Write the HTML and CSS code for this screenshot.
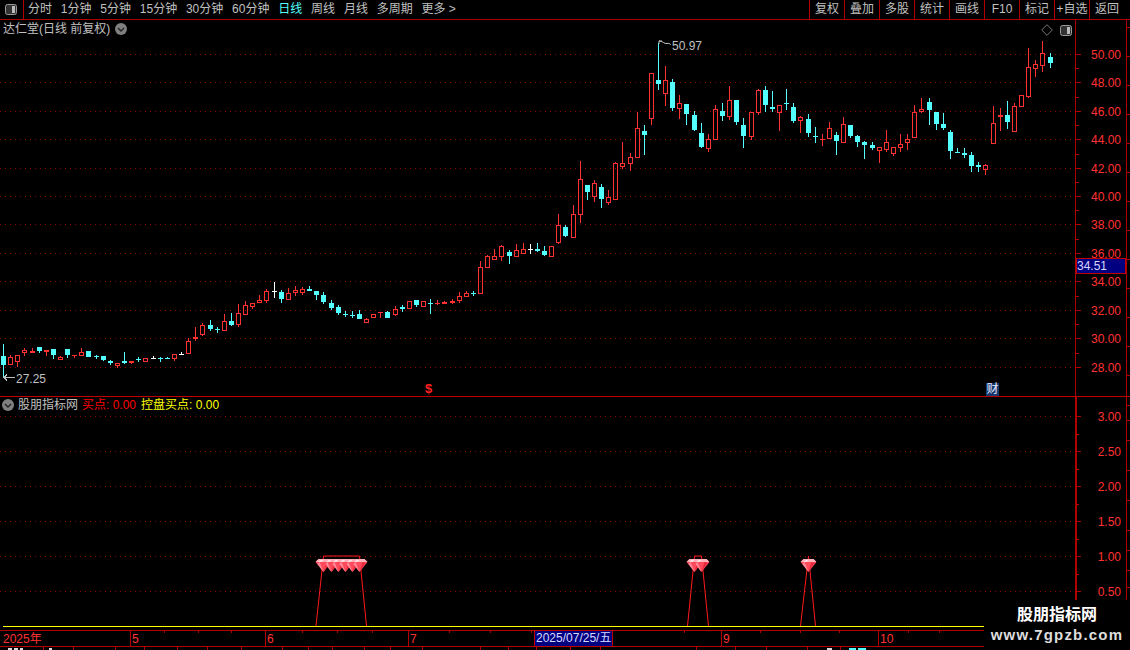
FILE: index.html
```html
<!DOCTYPE html>
<html lang="zh-CN">
<head>
<meta charset="utf-8">
<title>达仁堂 日线</title>
<link rel="stylesheet" href="styles.css">
</head>
<body>
<div class="app">
  <header class="toolbar">
    <div class="layout-btn"><svg class="panel-icon" viewBox="0 0 12 11"><rect x=".5" y=".5" width="11" height="10" rx="2" class="pi-frame"/><rect x="7" y="2" width="3" height="7" class="pi-fill"/></svg></div>
    <nav class="periods">
      <span>分时</span><span>1分钟</span><span>5分钟</span><span>15分钟</span><span>30分钟</span><span>60分钟</span><span class="active">日线</span><span>周线</span><span>月线</span><span>多周期</span><span>更多 &gt;</span>
    </nav>
    <nav class="actions">
      <span>复权</span><span>叠加</span><span>多股</span><span>统计</span><span>画线</span><span>F10</span><span>标记</span><span>+自选</span><span>返回</span>
    </nav>
  </header>

  <section class="pane pane-upper">
    <svg id="upper" class="canvas" viewBox="0 20 1130 376" width="1130" height="376"></svg>
    <div class="pane-title">
      <span>达仁堂(日线 前复权)</span>
      <svg class="chev" viewBox="0 0 12 12"><circle cx="6" cy="6" r="6" class="chev-bg"/><path d="M3 5l3 3 3-3" class="chev-line"/></svg>
    </div>
    <div class="pane-tools">
      <svg class="diamond" viewBox="0 0 12 12"><path d="M6 .7L11.3 6 6 11.3.7 6z"/></svg>
      <svg class="panel-icon" viewBox="0 0 12 11"><rect x=".5" y=".5" width="11" height="10" rx="2" class="pi-frame"/><rect x="7" y="2" width="3" height="7" class="pi-fill"/></svg>
    </div>
    <div class="last-price">34.51</div>
    <div class="flag-s">$</div>
    <div class="flag-cai">财</div>
  </section>

  <section class="pane pane-lower">
    <svg id="lower" class="canvas" viewBox="0 397 1130 233" width="1130" height="233">
      <defs>
        <symbol id="gem" viewBox="0 0 16 13">
          <path d="M0 3L3 0H13L16 3L8 13Z" fill="#ff4a5c"/>
          <path d="M3 0H13L16 3H0Z" fill="#ffb4bc"/>
          <path d="M4 3L8 13L2 5Z" fill="#ff8c98"/>
          <path d="M11 3L8 13L14 4Z" fill="#e8283c"/>
          <path d="M5 1H8L6 3H3Z" fill="#ffe0e4"/>
        </symbol>
      </defs>
    </svg>
    <div class="pane-title lower-title">
      <svg class="chev" viewBox="0 0 12 12"><circle cx="6" cy="6" r="6" class="chev-bg"/><path d="M3 5l3 3 3-3" class="chev-line"/></svg>
      <span class="name">股朋指标网</span>
      <span class="buy">买点: 0.00</span>
      <span class="control">控盘买点: 0.00</span>
    </div>
  </section>

  <section class="timebar">
    <svg id="time" class="canvas" viewBox="0 630 1130 20" width="1130" height="20"></svg>
    <div class="cursor-date">2025/07/25/五</div>
  </section>

  <aside class="watermark">
    <strong>股朋指标网</strong>
    <span>www.7gpzb.com</span>
  </aside>
</div>
<script src="chart.js"></script>
</body>
</html>
```

FILE: styles.css
```css
* { box-sizing: border-box; }
html, body { margin: 0; padding: 0; background: #000; }
body { font-family: "Liberation Sans", "Noto Sans CJK SC", sans-serif; font-size: 12px; color: #c0c0c0; }
.app { position: relative; width: 1130px; height: 650px; overflow: hidden; background: #000; display: flex; flex-direction: column; }

.toolbar { display: flex; align-items: center; height: 20px; border-bottom: 1px solid #b00000; line-height: 19px; flex: none; }
.layout-btn { width: 24px; height: 19px; border-right: 1px solid #b00000; display: flex; align-items: center; justify-content: center; padding-right: 1px; }
.panel-icon { width: 12px; height: 11px; display: block; }
.pi-frame { fill: #333; stroke: #999; stroke-width: 1; }
.pi-fill { fill: #bbb; }
.periods { display: flex; gap: 8.8px; padding-left: 4px; white-space: nowrap; }
.periods .active { color: #54ffff; }
.actions { margin-left: auto; display: flex; height: 19px; }
.actions span { width: 35px; border-left: 1px solid #b00000; text-align: center; white-space: nowrap; letter-spacing: 0; }
.actions span:last-child { width: 41px; padding-right: 6px; }

.pane { position: relative; flex: none; }
.canvas { display: block; }
.pane-upper { height: 377px; border-bottom: 1px solid #c00000; }
.pane-lower { height: 233px; }

.pane-title { position: absolute; left: 3px; top: 2px; display: flex; align-items: center; gap: 5px; line-height: 14px; white-space: nowrap; }
.chev { width: 12px; height: 12px; display: block; }
.chev-bg { fill: #808080; }
.chev-line { fill: none; stroke: #222; stroke-width: 1.4; }
.lower-title { left: 2px; top: 1px; gap: 4px; }
.lower-title .buy { color: #ff0000; }
.lower-title .control { color: #ffff00; margin-left: 1px; }

.pane-tools { position: absolute; right: 58px; top: 4px; display: flex; align-items: center; gap: 7px; }
.diamond { width: 12px; height: 12px; display: block; }
.diamond path { fill: none; stroke: #777; stroke-width: 1; }

.last-price { position: absolute; left: 1076px; top: 238px; width: 50px; height: 16px; background: #000080; border: 1px solid #c00000; color: #d8d8ff; line-height: 14px; white-space: nowrap; }
.flag-s { position: absolute; left: 424px; top: 362px; width: 9px; color: #ff2020; font-weight: bold; line-height: 14px; font-size: 13px; text-align: center; }
.flag-cai { position: absolute; left: 986px; top: 363px; width: 13px; height: 13px; background: #16386c; color: #e8e8ff; line-height: 13px; text-align: center; }

.timebar { position: relative; flex: none; height: 20px; }
.cursor-date { position: absolute; left: 534px; top: 0; width: 79px; height: 17px; background: #000080; border: 1px solid #c00000; color: #d8d8ff; line-height: 15px; padding-left: 1px; white-space: nowrap; }

.watermark { position: absolute; left: 984px; top: 600px; width: 146px; height: 50px; background: #000; display: flex; flex-direction: column; align-items: center; padding-top: 4px; color: #f2f2f2; }
.watermark strong { font-size: 16px; line-height: 21px; font-weight: 700; color: #fff; }
.watermark span { font-size: 15px; line-height: 19px; font-weight: 700; letter-spacing: 1.2px; color: #ddd; }

.t-axis { font-size: 12px; fill: #ff3232; font-family: "Liberation Sans", sans-serif; }
.t-note { font-size: 12px; fill: #c0c0c0; font-family: "Liberation Sans", sans-serif; }
.t-time { font-size: 12px; fill: #ff3232; font-family: "Liberation Sans", "Noto Sans CJK SC", sans-serif; }
```

FILE: chart.js
```js
const NS = 'http://www.w3.org/2000/svg';
function el(parent, name, attrs, text) {
  const n = document.createElementNS(NS, name);
  for (const k in attrs) n.setAttribute(k, attrs[k]);
  if (text !== undefined) n.textContent = text;
  parent.appendChild(n);
  return n;
}
function line(p, x1, y1, x2, y2, color, extra) {
  return el(p, 'line', Object.assign({ x1, y1, x2, y2, stroke: color, 'stroke-width': 1, 'shape-rendering': 'crispEdges' }, extra || {}));
}
const AXIS = '#b00000', GRID = '#900000', RED = '#ff3232', CYAN = '#54ffff';
const colOf = i => Math.floor(3.56 + 7.119 * i);

// type, high, body top, body bottom, low
const K = [
['c',344,356,365,377],['r',355,357,365,365],['r',355,355,362,367],['r',348,350,353,356],['R',348,351,353,353],
['c',347,347,351,353],['R',350,350,352,356],['c',349,349,355,359],['r',356,357,360,360],['c',349,349,355,358],
['R',355,355,356,358],['r',348,352,356,356],['c',351,351,357,357],['c',355,356,357,359],['c',356,356,360,361],
['c',360,361,363,365],['r',363,363,366,368],['c',352,361,363,364],['R',361,361,363,364],['c',357,359,360,362],
['r',358,358,362,362],['w',356,358,359,359],['c',357,358,359,362],['c',357,358,359,359],['r',354,354,359,361],
['w',352,354,355,355],['r',338,341,354,354],['R',327,337,339,341],['r',323,325,335,336],['c',320,325,329,331],
['c',327,329,330,333],['r',314,321,331,331],['c',313,321,325,326],['r',304,313,325,327],['r',301,305,315,315],
['r',303,303,307,309],['r',295,300,303,303],['r',289,291,301,303],['w',282,291,292,298],['c',290,292,299,303],
['r',288,293,300,300],['r',286,290,293,296],['r',287,289,293,295],['c',286,289,291,291],['c',291,291,295,300],
['c',292,295,302,304],['c',300,303,308,310],['c',305,307,313,315],['c',311,314,315,317],['c',311,315,316,318],
['c',310,314,319,319],['r',318,319,323,323],['r',314,314,318,318],['R',312,312,313,318],['c',311,312,318,318],
['r',306,309,315,316],['c',305,307,309,312],['r',301,301,309,309],['c',300,300,305,307],['r',301,301,307,307],
['c',299,303,304,314],['R',300,303,304,305],['R',301,302,304,304],['R',299,301,303,304],['r',292,296,301,303],
['r',291,293,297,297],['c',291,293,294,296],['r',261,267,294,294],['r',255,256,268,268],['r',249,256,260,260],
['r',245,246,257,261],['c',250,252,256,264],['r',244,250,257,257],['r',243,249,254,254],['w',244,249,250,254],
['c',243,249,251,252],['c',246,251,255,256],['r',246,246,257,257],['r',214,225,243,244],['c',225,227,236,237],
['r',205,214,238,238],['r',161,179,215,223],['c',185,185,192,200],['r',180,183,197,202],['c',184,187,199,208],
['r',190,197,203,205],['r',162,163,200,200],['r',142,163,167,169],['r',153,157,164,171],['r',112,128,158,158],
['c',125,131,135,155],['r',73,73,119,125],['c',43,80,84,90],['r',66,80,94,106],['c',79,82,108,111],
['r',95,103,109,119],['c',104,104,114,125],['c',111,115,130,131],['c',123,133,147,148],['r',134,139,149,152],
['r',105,109,140,140],['c',103,111,116,121],['r',86,100,117,120],['c',100,100,122,125],['c',118,125,136,148],
['r',112,112,137,140],['r',89,90,113,115],['c',86,90,105,112],['c',91,107,109,112],['r',105,105,113,131],
['c',89,103,104,110],['c',103,107,121,123],['r',116,117,121,133],['c',114,119,133,137],['c',127,136,137,143],
['R',134,139,140,146],['r',122,128,139,139],['c',132,135,141,155],['r',117,124,143,143],['c',125,125,136,138],
['c',135,136,142,147],['c',141,142,145,159],['c',142,145,148,150],['r',147,147,151,163],['r',130,142,150,152],
['r',147,147,154,156],['r',134,144,148,152],['r',134,139,143,150],['r',105,112,138,138],['r',98,109,112,113],
['c',98,102,110,125],['c',112,112,124,130],['c',113,124,128,130],['c',130,132,151,159],['c',148,152,153,153],
['c',148,153,155,158],['c',152,155,166,172],['c',162,165,167,172],['r',164,165,170,175],['r',106,123,144,144],
['R',108,115,117,131],['c',101,115,122,129],['r',103,106,132,132],['r',95,95,107,107],['r',48,67,97,98],
['r',60,64,69,77],['r',41,53,66,72],['c',53,57,63,68]
];

/* ---------- upper pane ---------- */
const up = document.getElementById('upper');
const priceY = [54, 82, 111, 139, 168, 196, 224, 253, 281, 310, 338, 367];
priceY.forEach((y, i) => {
  line(up, 0, y + .5, 1075, y + .5, GRID, { 'stroke-dasharray': '1 4' });
  line(up, 1076, y + .5, 1081, y + .5, AXIS);
  if (i < priceY.length - 1) line(up, 1076, (y + priceY[i + 1]) / 2 + .5 | 0, 1079, (y + priceY[i + 1]) / 2 + .5 | 0, AXIS);
  el(up, 'text', { x: 1121, y: y + 5, 'text-anchor': 'end', class: 't-axis' }, (50 - i * 2).toFixed(2));
});
line(up, 1075.5, 20, 1075.5, 396, AXIS);
line(up, 1126.5, 20, 1126.5, 396, AXIS);
for (let y = 27; y < 396; y += 29) line(up, 1127, y + .5, 1130, y + .5, AXIS);

K.forEach((k, i) => {
  const [t, hi, top, bot, lo] = k;
  const c = colOf(i), mid = c + .5;
  const color = t === 'c' ? CYAN : t === 'w' ? '#ffffff' : RED;
  const wick = (a, b) => { if (b > a) el(up, 'rect', { x: c, y: a, width: 1, height: b - a, fill: color, 'shape-rendering': 'crispEdges' }); };
  wick(hi, top);
  wick(bot, lo);
  if (t === 'r') {
    el(up, 'rect', { x: mid - 2, y: top + .5, width: 4, height: Math.max(bot - top - 1, 1), fill: 'none', stroke: color, 'stroke-width': 1, 'shape-rendering': 'crispEdges' });
  } else {
    el(up, 'rect', { x: c - 2, y: top, width: 5, height: Math.max(bot - top, 1), fill: color, 'shape-rendering': 'crispEdges' });
  }
});

el(up, 'path', { d: 'M659 44V41h3M659 41c4 0 5 3 8 2.500s3 1 4 1', fill: 'none', stroke: '#c0c0c0', 'stroke-width': 1 });
el(up, 'text', { x: 672, y: 50, class: 't-note' }, '50.97');
el(up, 'path', { d: 'M15 377.500H4M7 374.500L4 377.500L7 380.500', fill: 'none', stroke: '#c0c0c0', 'stroke-width': 1, 'shape-rendering': 'crispEdges' });
el(up, 'text', { x: 16, y: 383, class: 't-note' }, '27.25');

/* ---------- lower pane ---------- */
const low = document.getElementById('lower');
const ind = [416, 451, 486, 521, 556, 591];
ind.forEach((y, i) => {
  line(low, 0, y + .5, 1075, y + .5, GRID, { 'stroke-dasharray': '1 4' });
  line(low, 1076, y + .5, 1081, y + .5, AXIS);
  line(low, 1076, y + 18.5, 1079, y + 18.5, AXIS);
  el(low, 'text', { x: 1121, y: y + 5, 'text-anchor': 'end', class: 't-axis' }, (3 - i * .5).toFixed(2));
});
line(low, 1076, 397, 1076, 630, AXIS, { 'stroke-width': 2 });
line(low, 1126.5, 397, 1126.5, 630, AXIS);
[405, 420, 440, 470, 500, 530, 550, 570, 587].forEach(y => line(low, 1127, y + .5, 1130, y + .5, AXIS));

[
  '316,626 323.500,556 359.500,556 366.500,626',
  '687.500,626 694.500,556 701.500,556 708.500,626',
  '800.500,626 808.500,556 815.500,626'
].forEach(points => el(low, 'polyline', { points, fill: 'none', stroke: '#ff1a1a', 'stroke-width': 1 }));
[45, 46, 47, 48, 49, 50, 97, 98, 113].forEach(i => {
  el(low, 'use', { href: '#gem', x: colOf(i) - 7.5, y: 559, width: 16, height: 13 });
});
line(low, 3, 626.5, 1076, 626.5, '#ffff00');

/* ---------- time axis ---------- */
const tm = document.getElementById('time');
line(tm, 0, 630.5, 1130, 630.5, AXIS);
line(tm, 0, 646.5, 1130, 646.5, AXIS);
[130, 265, 408, 534, 612, 721, 878].forEach(x => line(tm, x + .5, 631, x + .5, 646, AXIS));
[164, 198, 231, 302, 337, 372, 449, 490, 531, 684, 760, 800, 839, 908, 939].forEach(x => line(tm, x + .5, 631, x + .5, 633, AXIS));
[43, 73, 115, 144, 177, 207, 241, 282, 308, 332, 364, 390, 422, 480, 508, 536, 570, 600, 696, 735, 766, 807, 840].forEach(x => line(tm, x + .5, 647, x + .5, 650, AXIS));
[['2025年', 3], ['5', 132], ['6', 267], ['7', 410], ['9', 723], ['10', 880]].forEach(([s, x]) => el(tm, 'text', { x, y: 643, class: 't-time' }, s));
[[8, 4, '#ddd'], [14, 4, '#ddd'], [20, 3, '#ddd'], [49, 3, '#ddd'], [827, 5, '#ddd'], [849, 7, CYAN], [858, 8, CYAN]].forEach(([x, w, fill]) => el(tm, 'rect', { x, y: 648, width: w, height: 2, fill }));
```
